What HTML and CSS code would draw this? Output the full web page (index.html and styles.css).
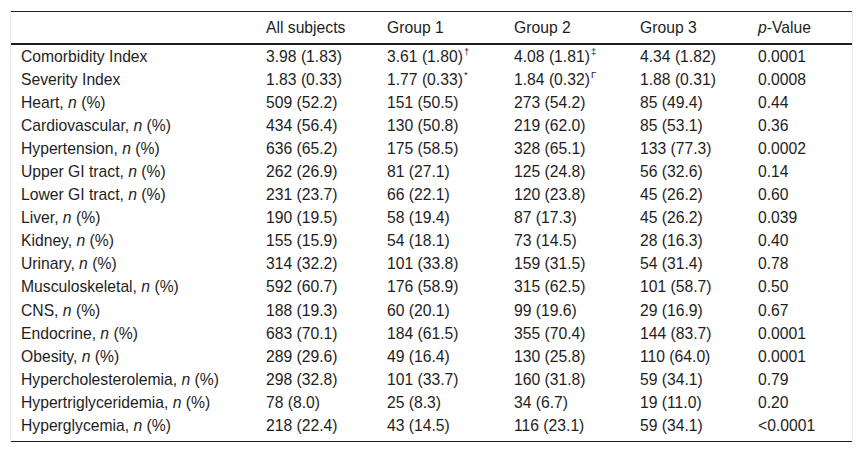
FILE: index.html
```html
<!DOCTYPE html>
<html>
<head>
<meta charset="utf-8">
<link rel="stylesheet" href="styles.css">
</head>
<body>
<div class="wrap">
<table class="data">
<colgroup>
<col class="c1"><col class="c2"><col class="c3"><col class="c4"><col class="c5"><col class="c6">
</colgroup>
<thead>
<tr><th></th><th>All subjects</th><th>Group 1</th><th>Group 2</th><th>Group 3</th><th><i>p</i>-Value</th></tr>
</thead>
<tbody>
<tr><td>Comorbidity Index</td><td>3.98 (1.83)</td><td>3.61 (1.80)<sup>†</sup></td><td>4.08 (1.81)<sup>‡</sup></td><td>4.34 (1.82)</td><td>0.0001</td></tr>
<tr><td>Severity Index</td><td>1.83 (0.33)</td><td>1.77 (0.33)<sup>*</sup></td><td>1.84 (0.32)<sup>Γ</sup></td><td>1.88 (0.31)</td><td>0.0008</td></tr>
<tr><td>Heart, <i>n</i> (%)</td><td>509 (52.2)</td><td>151 (50.5)</td><td>273 (54.2)</td><td>85 (49.4)</td><td>0.44</td></tr>
<tr><td>Cardiovascular, <i>n</i> (%)</td><td>434 (56.4)</td><td>130 (50.8)</td><td>219 (62.0)</td><td>85 (53.1)</td><td>0.36</td></tr>
<tr><td>Hypertension, <i>n</i> (%)</td><td>636 (65.2)</td><td>175 (58.5)</td><td>328 (65.1)</td><td>133 (77.3)</td><td>0.0002</td></tr>
<tr><td>Upper GI tract, <i>n</i> (%)</td><td>262 (26.9)</td><td>81 (27.1)</td><td>125 (24.8)</td><td>56 (32.6)</td><td>0.14</td></tr>
<tr><td>Lower GI tract, <i>n</i> (%)</td><td>231 (23.7)</td><td>66 (22.1)</td><td>120 (23.8)</td><td>45 (26.2)</td><td>0.60</td></tr>
<tr><td>Liver, <i>n</i> (%)</td><td>190 (19.5)</td><td>58 (19.4)</td><td>87 (17.3)</td><td>45 (26.2)</td><td>0.039</td></tr>
<tr><td>Kidney, <i>n</i> (%)</td><td>155 (15.9)</td><td>54 (18.1)</td><td>73 (14.5)</td><td>28 (16.3)</td><td>0.40</td></tr>
<tr><td>Urinary, <i>n</i> (%)</td><td>314 (32.2)</td><td>101 (33.8)</td><td>159 (31.5)</td><td>54 (31.4)</td><td>0.78</td></tr>
<tr><td>Musculoskeletal, <i>n</i> (%)</td><td>592 (60.7)</td><td>176 (58.9)</td><td>315 (62.5)</td><td>101 (58.7)</td><td>0.50</td></tr>
<tr><td>CNS, <i>n</i> (%)</td><td>188 (19.3)</td><td>60 (20.1)</td><td>99 (19.6)</td><td>29 (16.9)</td><td>0.67</td></tr>
<tr><td>Endocrine, <i>n</i> (%)</td><td>683 (70.1)</td><td>184 (61.5)</td><td>355 (70.4)</td><td>144 (83.7)</td><td>0.0001</td></tr>
<tr><td>Obesity, <i>n</i> (%)</td><td>289 (29.6)</td><td>49 (16.4)</td><td>130 (25.8)</td><td>110 (64.0)</td><td>0.0001</td></tr>
<tr><td>Hypercholesterolemia, <i>n</i> (%)</td><td>298 (32.8)</td><td>101 (33.7)</td><td>160 (31.8)</td><td>59 (34.1)</td><td>0.79</td></tr>
<tr><td>Hypertriglyceridemia, <i>n</i> (%)</td><td>78 (8.0)</td><td>25 (8.3)</td><td>34 (6.7)</td><td>19 (11.0)</td><td>0.20</td></tr>
<tr><td>Hyperglycemia, <i>n</i> (%)</td><td>218 (22.4)</td><td>43 (14.5)</td><td>116 (23.1)</td><td>59 (34.1)</td><td>&lt;0.0001</td></tr>
</tbody>
</table>
</div>
</body>
</html>
```

FILE: styles.css
```css
html, body {
  margin: 0;
  padding: 0;
  background: #fff;
}
body {
  font-family: "Liberation Sans", Arial, sans-serif;
  font-size: 15.7px;
  color: #1e1e1e;
}
.wrap {
  margin: 11px 10px 0 10px;
  border-left: 1px solid #ececec;
  border-right: 1px solid #ececec;
}
.data {
  width: 100%;
  border-collapse: collapse;
  table-layout: fixed;
  border-top: 1px solid #1e1e1e;
  border-bottom: 1px solid #1e1e1e;
}
.c1 { width: 245px; }
.c2 { width: 121px; }
.c3 { width: 127px; }
.c4 { width: 126px; }
.c5 { width: 118px; }
.c6 { width: 104px; }
.data thead tr {
  border-bottom: 2px solid #1e1e1e;
}
.data th {
  font-weight: normal;
  text-align: left;
  height: 30px;
  padding: 0 10px 1px;
  line-height: 17px;
  vertical-align: middle;
}
.data td {
  text-align: left;
  padding: 0 10px 1px;
  height: 22.1px;
  line-height: 17px;
  vertical-align: middle;
  white-space: nowrap;
}
.data tbody tr:last-child td {
  height: 24.5px;
  vertical-align: top;
  padding-top: 2px;
  padding-bottom: 0;
}
.data sup {
  font-size: 9.5px;
  line-height: 0;
  vertical-align: 7px;
  margin-left: 1px;
}
```
